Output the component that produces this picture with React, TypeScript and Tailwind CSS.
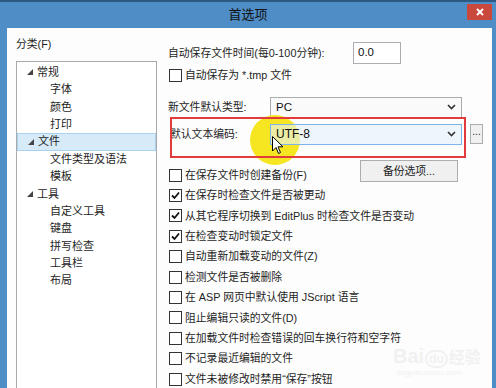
import React from "react";

const font = { fontFamily: '"Liberation Sans", "Noto Sans CJK SC", sans-serif' };

function Check({ checked }: { checked?: boolean }) {
  return (
    <span className="w-[13px] h-[13px] border border-[#333] bg-white flex items-center justify-center shrink-0">
      {checked && (
        <svg width="9" height="9" viewBox="0 0 9 9">
          <polyline points="1,4.5 3.5,7 8,1.5" fill="none" stroke="#111" strokeWidth="1.8" />
        </svg>
      )}
    </span>
  );
}

function CheckRow({ label, checked }: { label: string; checked?: boolean }) {
  return (
    <div className="h-[20.4px] flex items-center gap-[3px] pl-[1px] relative z-10">
      <Check checked={checked} />
      <span className="text-[10.8px] leading-none text-[#1e1e1e]">{label}</span>
    </div>
  );
}

function Chevron() {
  return (
    <svg width="9" height="6" viewBox="0 0 9 6">
      <polyline points="1,1 4.5,4.5 8,1" fill="none" stroke="#333" strokeWidth="1.6" />
    </svg>
  );
}

function Tri() {
  return (
    <svg width="6" height="6" viewBox="0 0 6 6" className="shrink-0">
      <polygon points="6,0 6,6 0,6" fill="#444" />
    </svg>
  );
}

const tree: { t: string; level: number; sel?: boolean }[] = [
  { t: "常规", level: 0 },
  { t: "字体", level: 1 },
  { t: "颜色", level: 1 },
  { t: "打印", level: 1 },
  { t: "文件", level: 0, sel: true },
  { t: "文件类型及语法", level: 1 },
  { t: "模板", level: 1 },
  { t: "工具", level: 0 },
  { t: "自定义工具", level: 1 },
  { t: "键盘", level: 1 },
  { t: "拼写检查", level: 1 },
  { t: "工具栏", level: 1 },
  { t: "布局", level: 1 },
];

const checks: [string, boolean][] = [
  ["在保存时检查文件是否被更动", true],
  ["从其它程序切换到 EditPlus 时检查文件是否变动", true],
  ["在检查变动时锁定文件", true],
  ["自动重新加载变动的文件(Z)", false],
  ["检测文件是否被删除", false],
  ["在 ASP 网页中默认使用 JScript 语言", false],
  ["阻止编辑只读的文件(D)", false],
  ["在加载文件时检查错误的回车换行符和空字符", false],
  ["不记录最近编辑的文件", false],
  ["文件未被修改时禁用\u201c保存\u201d按钮", false],
];

export default function App() {
  return (
    <div
      className="w-[496px] h-[388px] bg-[#4f8dc6] overflow-hidden flex flex-col border-t-[2px] border-[#2c5a85]"
      style={font}
    >
      {/* title bar */}
      <div className="h-[26px] relative flex items-center justify-center shrink-0">
        <span className="text-[13px] leading-none text-[#111] mt-[-1px]">首选项</span>
        <div className="absolute right-[4px] top-[2px] w-[25px] h-[16px] bg-[#c94a3c] flex items-center justify-center">
          <svg width="8" height="8" viewBox="0 0 8 8">
            <path d="M1 1 L7 7 M7 1 L1 7" stroke="#fff" strokeWidth="1.8" />
          </svg>
        </div>
      </div>

      {/* client */}
      <div className="flex-1 mr-[4px] ml-[7px] bg-[#fdfdfd] flex relative">
        {/* left */}
        <div className="w-[150px] pl-[9px] flex flex-col">
          <div className="h-[33px] flex items-center text-[10.8px] leading-none text-[#1e1e1e]">分类(F)</div>
          <div className="flex-1 border border-[#a9a9a9] border-b-0 bg-white pt-[1.6px] w-[141px]">
            {tree.map((n) => (
              <div
                key={n.t}
                className={
                  "h-[17.4px] flex items-center text-[11px] leading-none text-[#1e1e1e] " +
                  (n.sel ? "bg-[#d6eaf8] border border-[#a8d2f0]" : "")
                }
              >
                {n.level === 0 ? (
                  <div className="flex items-center gap-[4px] pl-[10px]">
                    <Tri />
                    <span>{n.t}</span>
                  </div>
                ) : (
                  <span className="pl-[33px]">{n.t}</span>
                )}
              </div>
            ))}
          </div>
        </div>

        {/* right */}
        <div className="flex-1 pl-[11px] pt-[14px] flex flex-col relative">
          {/* watermark */}
          <div className="absolute left-[236px] top-[318px] flex flex-col items-start pointer-events-none z-0">
            <span className="text-[20px] leading-none font-bold text-[#f1f1f1]">
              Bai<span className="text-[12px] border-2 border-[#f1f1f1] rounded-full px-[2px] mx-[1px]">du</span>
              <span className="text-[16px]">经验</span>
            </span>
            <span className="text-[8px] leading-none text-[#f1f1f1] mt-[3px] ml-[4px]">jingyan.baidu.com</span>
          </div>

          {/* yellow highlight */}
          <div className="absolute left-[93px] top-[87px] w-[50px] h-[50px] rounded-full bg-[#f6e622] z-0" />

          <div className="h-[22px] flex items-center">
            <span className="w-[185px] text-[10.8px] leading-none text-[#1e1e1e]">自动保存文件时间(每0-100分钟):</span>
            <div className="w-[48px] h-[22px] border border-[#abadb3] bg-white flex items-center pl-[4px] text-[11.5px] leading-none text-[#111]">
              0.0
            </div>
          </div>

          <div className="mt-[1px]">
            <CheckRow label="自动保存为 *.tmp 文件" />
          </div>

          <div className="mt-[11.6px] h-[21px] flex items-center">
            <span className="w-[102px] text-[10.8px] leading-none text-[#1e1e1e]">新文件默认类型:</span>
            <div className="w-[192px] h-[21px] border border-[#acacac] bg-[#fafafa] flex items-center justify-between pl-[5px] pr-[5px] text-[11.5px] leading-none text-[#111]">
              <span>PC</span>
              <Chevron />
            </div>
          </div>

          <div className="mt-[6px] h-[21px] flex items-center relative">
            <span className="w-[102px] text-[10.8px] leading-none text-[#1e1e1e] pl-[2px]">默认文本编码:</span>
            <div className="relative z-10 w-[192px] h-[21px] border border-[#7eb4ea] bg-[#e5f1fb]/60 flex items-center justify-between pl-[5px] pr-[5px] text-[12px] leading-none text-[#111]">
              <span>UTF-8</span>
              <Chevron />
            </div>
            <div className="ml-[8px] w-[13px] h-[20px] border border-[#adadad] bg-[#f0f0f0] flex items-end justify-center pb-[6px] text-[10px] leading-none text-[#222]">
              ...
            </div>
            {/* red annotation box */}
            <div className="absolute left-[2px] top-[-7px] w-[296px] h-[41px] border-[2px] border-[#e23b3b] z-20 pointer-events-none" />
            {/* cursor */}
            <svg className="absolute left-[104px] top-[12px] z-30" width="12" height="19" viewBox="0 0 12 19">
              <path d="M0.5 0.5 L0.5 15 L4 11.5 L6.5 17.5 L8.5 16.5 L6 10.8 L11 10.8 Z" fill="#fff" stroke="#000" strokeWidth="1" />
            </svg>
          </div>

          <div className="mt-[15px] flex items-start">
            <div className="w-[192px] mt-[5px]">
              <CheckRow label="在保存文件时创建备份(F)" />
            </div>
            <div className="w-[98px] h-[22px] border border-[#adadad] bg-[#f0f0f0] flex items-center justify-center text-[10.8px] leading-none text-[#1e1e1e]">
              备份选项...
            </div>
          </div>

          {checks.map(([l, c]) => (
            <CheckRow key={l} label={l} checked={c} />
          ))}
        </div>
      </div>
    </div>
  );
}
